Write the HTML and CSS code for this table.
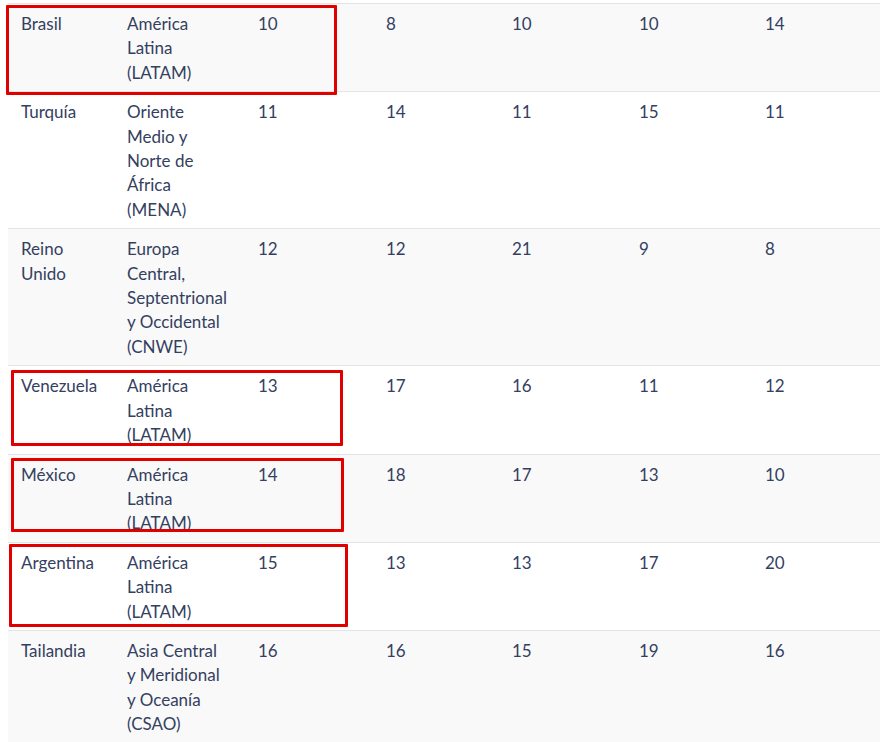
FILE: index.html
```html
<!DOCTYPE html>
<html lang="es">
<head>
<meta charset="utf-8">
<link rel="stylesheet" href="styles.css">
</head>
<body>
<div class="wrap">
  <table class="rank">
    <colgroup>
      <col class="c1"><col class="c2"><col class="c3"><col class="c4"><col class="c5"><col class="c6"><col class="c7">
    </colgroup>
    <tbody>
      <tr class="odd"><td>Brasil</td><td>América<br>Latina<br>(LATAM)</td><td>10</td><td>8</td><td>10</td><td>10</td><td>14</td></tr>
      <tr><td>Turquía</td><td>Oriente<br>Medio y<br>Norte de<br>África<br>(MENA)</td><td>11</td><td>14</td><td>11</td><td>15</td><td>11</td></tr>
      <tr class="odd"><td>Reino<br>Unido</td><td>Europa<br>Central,<br>Septentrional<br>y Occidental<br>(CNWE)</td><td>12</td><td>12</td><td>21</td><td>9</td><td>8</td></tr>
      <tr><td>Venezuela</td><td>América<br>Latina<br>(LATAM)</td><td>13</td><td>17</td><td>16</td><td>11</td><td>12</td></tr>
      <tr class="odd"><td>México</td><td>América<br>Latina<br>(LATAM)</td><td>14</td><td>18</td><td>17</td><td>13</td><td>10</td></tr>
      <tr><td>Argentina</td><td>América<br>Latina<br>(LATAM)</td><td>15</td><td>13</td><td>13</td><td>17</td><td>20</td></tr>
      <tr class="odd"><td>Tailandia</td><td>Asia Central<br>y Meridional<br>y Oceanía<br>(CSAO)</td><td>16</td><td>16</td><td>15</td><td>19</td><td>16</td></tr>
    </tbody>
  </table>
  <div class="mark m1"></div>
  <div class="mark m2"></div>
  <div class="mark m3"></div>
  <div class="mark m4"></div>
</div>
</body>
</html>
```
FILE: styles.css
```css
html, body {
  margin: 0;
  padding: 0;
  background: #ffffff;
  overflow: hidden;
}
.wrap {
  position: relative;
  padding: 3px 0 0 8px;
  width: 872px;
}
.rank {
  border-collapse: collapse;
  table-layout: fixed;
  width: 872px;
  font-family: "Lato", "Noto Sans", sans-serif;
  font-size: 17px;
  line-height: 24.4px;
  color: #34405f;
}
.c1 { width: 106px; }
.c2 { width: 131px; }
.c3 { width: 128px; }
.c4 { width: 126px; }
.c5 { width: 127px; }
.c6 { width: 126px; }
.c7 { width: 128px; }
.rank td {
  border-top: 1px solid #e4e4e4;
  padding: 8px 0 6px 13px;
  vertical-align: top;
  text-align: left;
  white-space: nowrap;
}
.rank tr.odd td {
  background: #f9f9f9;
}
.mark {
  position: absolute;
  border: 3px solid #e00000;
  border-radius: 1px;
  box-sizing: border-box;
}
.m1 { left: 6px; top: 5px; width: 331px; height: 90px; }
.m2 { left: 11px; top: 370px; width: 332px; height: 76px; }
.m3 { left: 11px; top: 458px; width: 333px; height: 74px; }
.m4 { left: 9px; top: 544px; width: 339px; height: 83px; }
```
